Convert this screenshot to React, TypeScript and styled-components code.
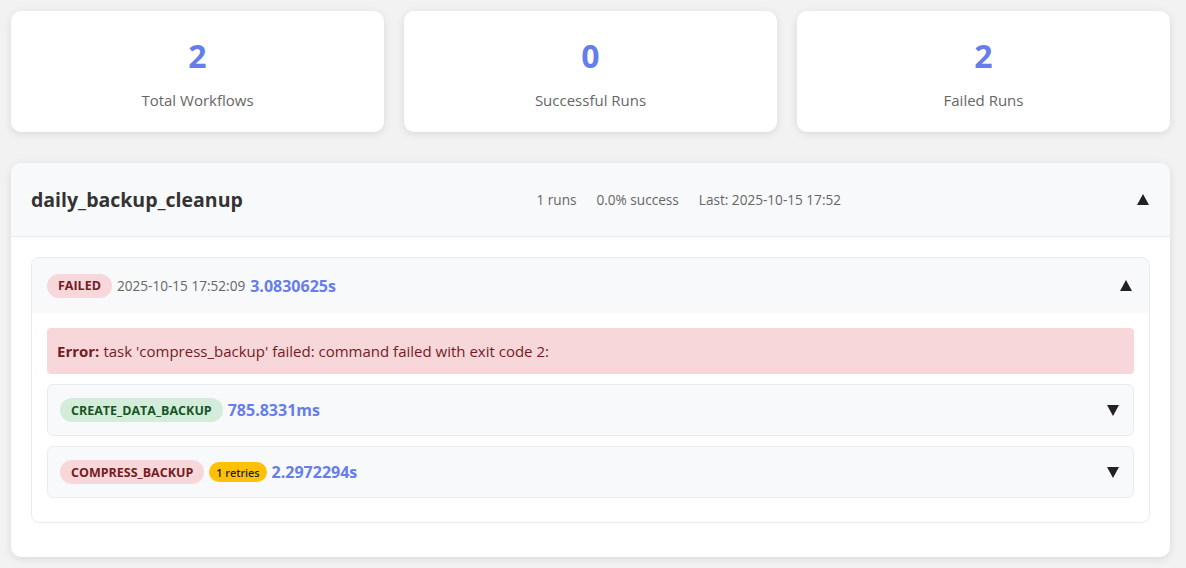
import React from "react";
import styled, { createGlobalStyle } from "styled-components";

const Global = createGlobalStyle`
  body {
    margin: 0;
    background: #f2f2f2;
    font-family: "Open Sans", "Noto Sans", sans-serif;
    color: #333;
  }
`;

const Page = styled.div`
  padding: 11px 16px 11px 11px;
`;

const Stats = styled.div`
  display: grid;
  grid-template-columns: repeat(3, 1fr);
  gap: 20px;
  margin-bottom: 31px;
`;

const StatCard = styled.div`
  background: #fff;
  border-radius: 10px;
  box-shadow: 0 2px 8px rgba(0, 0, 0, 0.1);
  height: 121px;
  display: flex;
  flex-direction: column;
  align-items: center;
  justify-content: center;
  padding-top: 6px;
  box-sizing: border-box;
`;

const StatValue = styled.div`
  font-size: 32px;
  font-weight: 700;
  color: #667eea;
  line-height: 1;
  margin-bottom: 18px;
`;

const StatLabel = styled.div`
  font-size: 15px;
  color: #666;
`;

const Workflow = styled.div`
  background: #fff;
  border-radius: 10px;
  box-shadow: 0 2px 8px rgba(0, 0, 0, 0.1);
  overflow: hidden;
`;

const WorkflowHeader = styled.div`
  display: flex;
  align-items: center;
  height: 73px;
  padding: 0 20px;
  background: #f8f9fa;
  border-bottom: 1px solid #e9ecef;
`;

const WorkflowTitle = styled.h2`
  margin: 0;
  font-size: 19.5px;
  font-weight: 700;
  color: #333;
  flex: 1;
`;

const Meta = styled.div`
  display: flex;
  gap: 20px;
  font-size: 13.6px;
  color: #666;
  margin-right: 296px;
`;

const Arrow = styled.span<{ $down?: boolean }>`
  width: 0;
  height: 0;
  border-left: 6px solid transparent;
  border-right: 6px solid transparent;
  ${(p) =>
    p.$down
      ? "border-top: 11px solid #222;"
      : "border-bottom: 11px solid #222;"}
  margin-right: 1px;
`;

const WorkflowBody = styled.div`
  padding: 20px 20px 34px;
`;

const Run = styled.div`
  border: 1px solid #e9ecef;
  border-radius: 8px;
  overflow: hidden;
`;

const RunHeader = styled.div`
  display: flex;
  align-items: center;
  gap: 5px;
  height: 55px;
  padding: 0 16px 0 15px;
  background: #f8f9fa;
`;

const Badge = styled.span<{ $tone: "fail" | "ok" }>`
  display: inline-flex;
  align-items: center;
  height: 24px;
  padding: 0 11px;
  border-radius: 12px;
  font-size: 12.5px;
  font-weight: 700;
  background: ${(p) => (p.$tone === "fail" ? "#f8d7da" : "#d4edda")};
  color: ${(p) => (p.$tone === "fail" ? "#721c24" : "#155724")};
`;

const Retry = styled.span`
  display: inline-flex;
  align-items: center;
  height: 20px;
  padding: 0 7px;
  border-radius: 10px;
  background: #ffc107;
  color: #212529;
  font-size: 10.8px;
  font-weight: 600;
`;

const Time = styled.span`
  font-size: 13.6px;
  color: #666;
`;

const Duration = styled.span`
  font-size: 16px;
  font-weight: 700;
  color: #667eea;
  flex: 1;
`;

const RunBody = styled.div`
  padding: 15px 15px 24px;
  display: flex;
  flex-direction: column;
  gap: 10px;
`;

const ErrorBox = styled.div`
  background: #f8d7da;
  color: #721c24;
  border-radius: 4px;
  height: 46px;
  padding: 0 10px;
  display: flex;
  align-items: center;
  font-size: 15px;
  b {
    margin-right: 4px;
  }
`;

const Task = styled.div`
  display: flex;
  align-items: center;
  gap: 5px;
  height: 50px;
  padding: 0 13px 0 12px;
  background: #f8f9fa;
  border: 1px solid #e9ecef;
  border-radius: 6px;
`;

const tasks = [
  { name: "CREATE_DATA_BACKUP", ok: true, retries: 0, dur: "785.8331ms" },
  { name: "COMPRESS_BACKUP", ok: false, retries: 1, dur: "2.2972294s" },
];

export default function App() {
  return (
    <Page>
      <Global />
      <Stats>
        <StatCard>
          <StatValue>2</StatValue>
          <StatLabel>Total Workflows</StatLabel>
        </StatCard>
        <StatCard>
          <StatValue>0</StatValue>
          <StatLabel>Successful Runs</StatLabel>
        </StatCard>
        <StatCard>
          <StatValue>2</StatValue>
          <StatLabel>Failed Runs</StatLabel>
        </StatCard>
      </Stats>

      <Workflow>
        <WorkflowHeader>
          <WorkflowTitle>daily_backup_cleanup</WorkflowTitle>
          <Meta>
            <span>1 runs</span>
            <span>0.0% success</span>
            <span>Last: 2025-10-15 17:52</span>
          </Meta>
          <Arrow />
        </WorkflowHeader>
        <WorkflowBody>
          <Run>
            <RunHeader>
              <Badge $tone="fail">FAILED</Badge>
              <Time>2025-10-15 17:52:09</Time>
              <Duration>3.0830625s</Duration>
              <Arrow />
            </RunHeader>
            <RunBody>
              <ErrorBox>
                <b>Error:</b> task 'compress_backup' failed: command failed with exit code 2:
              </ErrorBox>
              {tasks.map((t) => (
                <Task key={t.name}>
                  <Badge $tone={t.ok ? "ok" : "fail"}>{t.name}</Badge>
                  {t.retries > 0 && <Retry>{t.retries} retries</Retry>}
                  <Duration>{t.dur}</Duration>
                  <Arrow $down />
                </Task>
              ))}
            </RunBody>
          </Run>
        </WorkflowBody>
      </Workflow>
    </Page>
  );
}
